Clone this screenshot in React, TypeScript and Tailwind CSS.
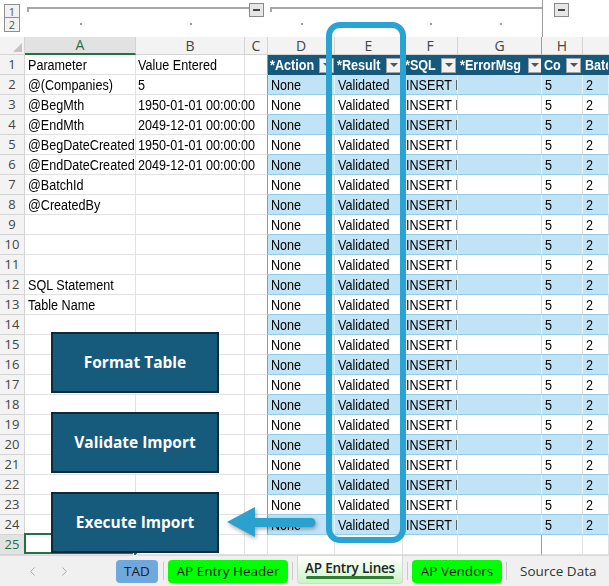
import React from "react";
import { ChevronLeft, ChevronRight } from "lucide-react";

const params: Record<number, [string, string]> = {
  1: ["Parameter", "Value Entered"],
  2: ["@(Companies)", "5"],
  3: ["@BegMth", "1950-01-01 00:00:00"],
  4: ["@EndMth", "2049-12-01 00:00:00"],
  5: ["@BegDateCreated", "1950-01-01 00:00:00"],
  6: ["@EndDateCreated", "2049-12-01 00:00:00"],
  7: ["@BatchId", ""],
  8: ["@CreatedBy", ""],
  12: ["SQL Statement", ""],
  13: ["Table Name", ""],
};

const tableCols = [
  { w: "w-[67px]", head: "*Action", val: "None" },
  { w: "w-[68px]", head: "*Result", val: "Validated" },
  { w: "w-[55px]", head: "*SQL", val: "INSERT I" },
  { w: "w-[84px]", head: "*ErrorMsg", val: "" },
  { w: "w-[41px]", head: "Co", val: "5" },
  { w: "flex-1", head: "Batc", val: "2" },
];

const rows = Array.from({ length: 25 }, (_, i) => i + 1);

// narrow text, like Excel's default narrow font
function N({ children }: { children: React.ReactNode }) {
  return <span className="inline-block origin-left scale-x-[0.9] whitespace-nowrap">{children}</span>;
}

function DropBtn() {
  return (
    <div className="ml-auto mr-px flex h-[15px] w-[15px] shrink-0 items-center justify-center border border-[#a3a3a3] bg-[#f2f2f2]">
      <div className="h-0 w-0 border-l-[4px] border-r-[4px] border-t-[4px] border-l-transparent border-r-transparent border-t-[#555]" />
    </div>
  );
}

function SheetRow({ n }: { n: number }) {
  const [a, b] = params[n] ?? ["", ""];
  const inTable = n <= 24;
  const blue = n % 2 === 0;
  const selected = n === 25;
  return (
    <div className="flex h-[20px]">
      <div
        className={`flex w-[25px] shrink-0 items-center justify-center border-b border-r border-[#d4d4d4] pt-px font-['Open_Sans',sans-serif] text-[13px] ${
          selected ? "bg-[#e2e2e2] text-[#217346]" : "bg-[#f3f3f3] text-[#444]"
        }`}
      >
        {n}
      </div>
      <div className="relative flex w-[111px] shrink-0 items-center border-b border-r border-[#e1e1e1] px-[3px] pt-[2px]">
        {a && <N>{a}</N>}
        {selected && (
          <>
            <div className="absolute -left-px -top-[2px] bottom-0 right-0 border-2 border-[#217346]" />
            <div className="absolute -bottom-[2px] -right-[3px] h-[5px] w-[5px] border border-white bg-[#217346]" />
          </>
        )}
      </div>
      <div className="relative z-10 flex w-[109px] shrink-0 items-center border-b border-r border-[#e1e1e1] px-[2px] pt-[2px]">
        {b && <N>{b}</N>}
      </div>
      <div
        className={`w-[23px] shrink-0 border-b border-r ${
          inTable ? "border-b-[#e1e1e1] border-r-[#5aaad6]" : "border-[#e1e1e1]"
        }`}
      />
      {tableCols.map((c, i) => {
        const edge = i === 3 ? "border-r-[#9c9c9c]" : "";
        if (n === 1) {
          return (
            <div
              key={i}
              className={`${c.w} flex shrink-0 items-center overflow-hidden border-b border-r border-b-[#155a7c] border-r-[#155a7c] bg-[#155a7c] pl-[2px] pt-px font-bold text-white ${edge}`}
            >
              <N>{c.head}</N>
              {i < 5 && <DropBtn />}
            </div>
          );
        }
        if (inTable) {
          return (
            <div
              key={i}
              className={`${c.w} flex shrink-0 items-center overflow-hidden border-b border-r border-b-[#93cbe8] px-[3px] pt-[2px] ${
                blue ? "border-r-[#e3f1f8] bg-[#c0e4f5]" : "border-r-[#dcdcdc] bg-white"
              } ${edge}`}
            >
              {c.val && <N>{c.val}</N>}
            </div>
          );
        }
        return <div key={i} className={`${c.w} shrink-0 border-b border-r border-[#e1e1e1] ${edge}`} />;
      })}
    </div>
  );
}

function Tab({ label, cls }: { label: string; cls: string }) {
  return (
    <div className={`flex h-[23px] shrink-0 items-center justify-center rounded-[4px] text-[#1a1a1a] ${cls}`}>
      {label}
    </div>
  );
}

function Sep({ w }: { w: string }) {
  return (
    <div className={`flex shrink-0 justify-center ${w}`}>
      <div className="h-[18px] w-px bg-[#c9c9c9]" />
    </div>
  );
}

export default function App() {
  return (
    <div className="relative h-[586px] w-[609px] overflow-hidden bg-white font-['Liberation_Sans',Arial,sans-serif] text-[14px] text-black">
      {/* outline bar */}
      <div className="relative h-[37px]">
        <div className="absolute left-[4px] top-[4px] flex flex-col font-['Open_Sans',sans-serif] text-[11px] leading-none text-[#555]">
          <div className="flex h-[14px] w-[16px] items-center justify-center border border-[#8f8f8f] bg-[#f2f2f2]">1</div>
          <div className="-mt-px flex h-[15px] w-[16px] items-center justify-center border border-[#8f8f8f] bg-[#f2f2f2]">2</div>
        </div>
        <div className="absolute left-[27px] top-[7px] h-[2px] w-[222px] bg-[#a8a8a8]" />
        <div className="absolute left-[27px] top-[7px] h-[5px] w-[2px] bg-[#a8a8a8]" />
        <div className="absolute left-[249px] top-[3px] flex h-[14px] w-[15px] items-center justify-center border border-[#8a8a8a] bg-[#e6e6e6]">
          <div className="h-[2px] w-[7px] bg-[#444]" />
        </div>
        <div className="absolute left-[270px] top-[7px] h-[2px] w-[272px] bg-[#a8a8a8]" />
        <div className="absolute left-[270px] top-[7px] h-[5px] w-[2px] bg-[#a8a8a8]" />
        <div className="absolute left-[554px] top-[3px] flex h-[14px] w-[15px] items-center justify-center border border-[#8a8a8a] bg-[#e6e6e6]">
          <div className="h-[2px] w-[7px] bg-[#444]" />
        </div>
        {[80, 190, 301, 430, 500].map((x) => (
          <div key={x} className="absolute top-[23px] h-[2px] w-[2px] bg-[#9a9a9a]" style={{ left: x }} />
        ))}
        <div className="absolute bottom-0 left-[542px] top-0 w-px bg-[#9c9c9c]" />
      </div>

      {/* column headers */}
      <div className="flex h-[18px] bg-[#f3f3f3] font-['Open_Sans',sans-serif] text-[14px] leading-none text-[#444]">
        <div className="relative w-[25px] shrink-0 border-b border-r border-[#d4d4d4]">
          <div className="absolute bottom-[2px] right-[2px] h-0 w-0 border-b-[9px] border-l-[9px] border-b-[#c4c4c4] border-l-transparent" />
        </div>
        <div className="flex w-[111px] shrink-0 items-center justify-center border-b-2 border-r border-b-[#217346] border-r-[#d4d4d4] bg-[#e2e2e2] text-[#217346]">A</div>
        <div className="flex w-[109px] shrink-0 items-center justify-center border-b border-r border-[#d4d4d4]">B</div>
        <div className="flex w-[23px] shrink-0 items-center justify-center border-b border-r border-[#d4d4d4]">C</div>
        <div className="flex w-[67px] shrink-0 items-center justify-center border-b border-r border-[#d4d4d4]">D</div>
        <div className="flex w-[68px] shrink-0 items-center justify-center border-b border-r border-[#d4d4d4]">E</div>
        <div className="flex w-[55px] shrink-0 items-center justify-center border-b border-r border-[#d4d4d4]">F</div>
        <div className="flex w-[84px] shrink-0 items-center justify-center border-b border-r border-[#d4d4d4] border-r-[#9c9c9c]">G</div>
        <div className="flex w-[41px] shrink-0 items-center justify-center border-b border-r border-[#d4d4d4]">H</div>
        <div className="flex-1 border-b border-[#d4d4d4]" />
      </div>

      {/* rows */}
      {rows.map((n) => (
        <SheetRow key={n} n={n} />
      ))}

      {/* sheet tabs */}
      <div className="flex h-[31px] items-center border-t border-[#d9d9d9] bg-[#f0f0f0] font-['Open_Sans',sans-serif] text-[13.5px]">
        <div className="flex w-[116px] shrink-0 items-center gap-[17px] pl-[25px] text-[#a0a0a0]">
          <ChevronLeft size={15} strokeWidth={1.5} />
          <ChevronRight size={15} strokeWidth={1.5} />
        </div>
        <Tab label="TAD" cls="w-[42px] bg-[#6fa8dc]" />
        <Sep w="w-[10px]" />
        <Tab label="AP Entry Header" cls="w-[120px] bg-[#00ff00]" />
        <Sep w="w-[9px]" />
        <div className="relative flex h-[28px] w-[106px] shrink-0 items-center justify-center self-start rounded-b-[4px] border border-t-0 border-[#d6d6d6] bg-gradient-to-b from-white to-[#c9f5c4] pb-[3px] font-semibold tracking-[-0.2px] text-[#222]">
          AP Entry Lines
          <div className="absolute bottom-[4px] left-[8px] right-[8px] h-[3px] rounded-full bg-[#2e7d32]" />
        </div>
        <Sep w="w-[9px]" />
        <Tab label="AP Vendors" cls="w-[90px] bg-[#00ff00]" />
        <Sep w="w-[9px]" />
        <div className="shrink-0 whitespace-nowrap pl-[9px] text-[#333]">Source Data</div>
      </div>

      {/* highlight around Result column */}
      <div className="absolute left-[326px] top-[22px] h-[521px] w-[80px] rounded-[14px] border-[6px] border-[#29a3d3]" />

      {/* macro buttons */}
      <div className="absolute left-[51px] top-[332px] z-20 flex flex-col gap-[19px] font-['Open_Sans',sans-serif] text-[15.5px] font-bold text-white">
        {["Format Table", "Validate Import", "Execute Import"].map((t) => (
          <div key={t} className="flex h-[61px] w-[168px] items-center justify-center border-2 border-[#0e2b3b] bg-[#165a7c]">
            {t}
          </div>
        ))}
      </div>

      {/* arrow */}
      <svg className="absolute left-[222px] top-[500px] z-20 drop-shadow-[1px_2px_2px_rgba(0,0,0,0.35)]" width="100" height="45" viewBox="0 0 100 45">
        <path d="M5 22 L33 7 L33 18 L89 18 A4.5 4.5 0 0 1 89 27 L33 27 L33 37 Z" fill="#2ba1d0" />
      </svg>
    </div>
  );
}
